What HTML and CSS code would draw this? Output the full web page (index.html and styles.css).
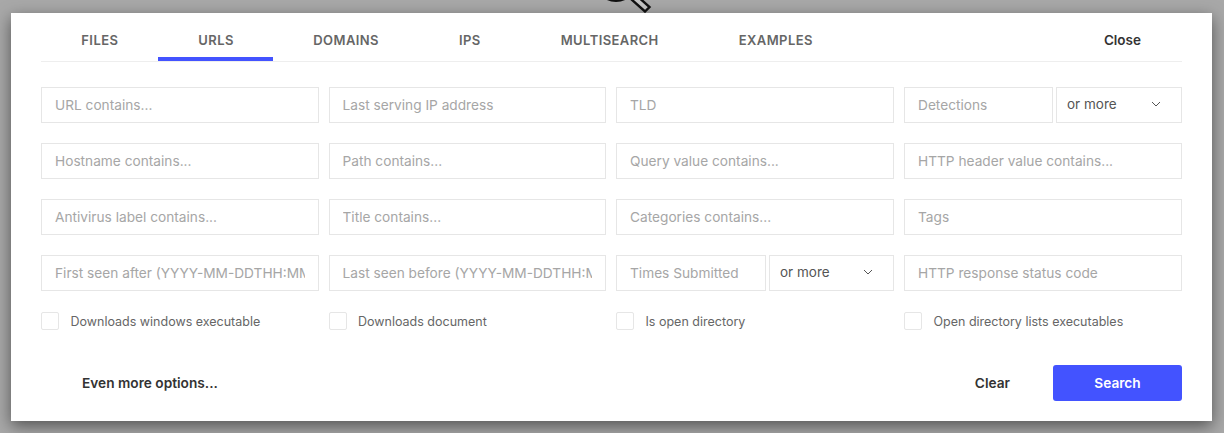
FILE: index.html
```html
<!DOCTYPE html>
<html lang="en">
<head>
<meta charset="utf-8">
<title>Search</title>
<link rel="stylesheet" href="styles.css">
</head>
<body>
<svg class="logo" width="70" height="13" viewBox="0 0 70 13"><circle cx="26" cy="-19" r="19.5" fill="none" stroke="#111" stroke-width="3"/><path d="M41 -1 L55 11.5 L59.5 7 L46 -5 Z" fill="#c4c4c4" stroke="#111" stroke-width="2.4"/></svg>
<main class="modal">
  <nav class="tabs">
    <a class="tab">FILES</a>
    <a class="tab active">URLS</a>
    <a class="tab">DOMAINS</a>
    <a class="tab">IPS</a>
    <a class="tab">MULTISEARCH</a>
    <a class="tab">EXAMPLES</a>
    <a class="close">Close</a>
  </nav>
  <form class="grid">
    <input class="field" placeholder="URL contains...">
    <input class="field" placeholder="Last serving IP address">
    <input class="field" placeholder="TLD">
    <div class="combo combo-wide">
      <input class="field" placeholder="Detections">
      <div class="select">or more<svg width="10" height="6" viewBox="0 0 10 6"><path d="M1 1 L5 5 L9 1" fill="none" stroke="#555" stroke-width="1"/></svg></div>
    </div>
    <input class="field" placeholder="Hostname contains...">
    <input class="field" placeholder="Path contains...">
    <input class="field" placeholder="Query value contains...">
    <input class="field" placeholder="HTTP header value contains...">
    <input class="field" placeholder="Antivirus label contains...">
    <input class="field" placeholder="Title contains...">
    <input class="field" placeholder="Categories contains...">
    <input class="field" placeholder="Tags">
    <input class="field" placeholder="First seen after (YYYY-MM-DDTHH:MM:SS)">
    <input class="field" placeholder="Last seen before (YYYY-MM-DDTHH:MM:SS)">
    <div class="combo combo-narrow">
      <input class="field" placeholder="Times Submitted">
      <div class="select">or more<svg width="10" height="6" viewBox="0 0 10 6"><path d="M1 1 L5 5 L9 1" fill="none" stroke="#555" stroke-width="1"/></svg></div>
    </div>
    <input class="field" placeholder="HTTP response status code">
    <label class="check"><span class="box"></span>Downloads windows executable</label>
    <label class="check"><span class="box"></span>Downloads document</label>
    <label class="check"><span class="box"></span>Is open directory</label>
    <label class="check"><span class="box"></span>Open directory lists executables</label>
  </form>
  <footer class="actions">
    <a class="more">Even more options...</a>
    <a class="clear">Clear</a>
    <button class="search" type="button">Search</button>
  </footer>
</main>
</body>
</html>
```
FILE: styles.css
```css
* { box-sizing: border-box; }
html, body { height: 100%; }
body {
  margin: 0;
  height: 433px;
  overflow: hidden;
  background: #a8a8a8;
  padding: 13px 12px 12px 11px;
  font-family: "Inter", "Liberation Sans", sans-serif;
  position: relative;
}
.logo { position: absolute; left: 590px; top: 0; }
.modal {
  background: #fff;
  height: 408px;
  padding: 0 30px;
  box-shadow: 0 5px 15px rgba(0, 0, 0, .5);
  position: relative;
}
.tabs {
  display: flex;
  align-items: stretch;
  height: 49px;
  border-bottom: 1px solid #eeeeee;
  padding-left: .3px;
}
.tab {
  padding: 0 40px;
  height: 48px;
  line-height: 55px;
  font-size: 13px;
  font-weight: 600;
  color: #666;
  letter-spacing: .42px;
  border-bottom: 4px solid transparent;
  white-space: nowrap;
}
.tab.active { border-bottom-color: #4353ff; padding-right: 39.4px; }
.close {
  margin-left: auto;
  margin-right: 41px;
  line-height: 55px;
  font-size: 13.5px;
  font-weight: 600;
  color: #333;
}
.grid {
  display: grid;
  grid-template-columns: repeat(4, 1fr);
  column-gap: 10px;
  row-gap: 20px;
  padding-top: 25px;
}
.field {
  display: block;
  width: 100%;
  min-width: 0;
  height: 36px;
  border: 1px solid #e6e6e6;
  border-radius: 0;
  background: #fff;
  padding: 0 13px 1px 13px;
  font: 400 13.7px "Inter", "Liberation Sans", sans-serif;
  color: #333;
  outline: none;
}
.field::placeholder { color: #a6a6a6; opacity: 1; }
.combo { display: grid; column-gap: 3px; }
.combo-wide { grid-template-columns: 149px 126px; }
.combo-narrow { grid-template-columns: 150px 125px; }
.select {
  display: flex;
  align-items: center;
  justify-content: space-between;
  height: 36px;
  border: 1px solid #e6e6e6;
  padding: 0 20px 2px 10px;
  font-size: 13.5px;
  color: #555;
}
.check {
  display: flex;
  align-items: center;
  gap: 11.5px;
  height: 18px;
  margin-top: 1px;
  font-size: 12.5px;
  color: #666;
}
.box {
  width: 18px;
  height: 18px;
  border: 1px solid #e6e6e6;
  border-radius: 2px;
  flex: none;
}
.actions {
  display: flex;
  align-items: center;
  margin-top: 35px;
  height: 36px;
}
.more {
  margin-left: 41px;
  margin-right: auto;
  font-size: 13.7px;
  font-weight: 600;
  color: #333;
}
.clear {
  margin-right: 43px;
  font-size: 13.7px;
  font-weight: 600;
  color: #333;
}
.search {
  width: 129px;
  height: 36px;
  border: 0;
  border-radius: 3px;
  background: #4353ff;
  color: #fff;
  font: 600 13.7px "Inter", "Liberation Sans", sans-serif;
}
```
